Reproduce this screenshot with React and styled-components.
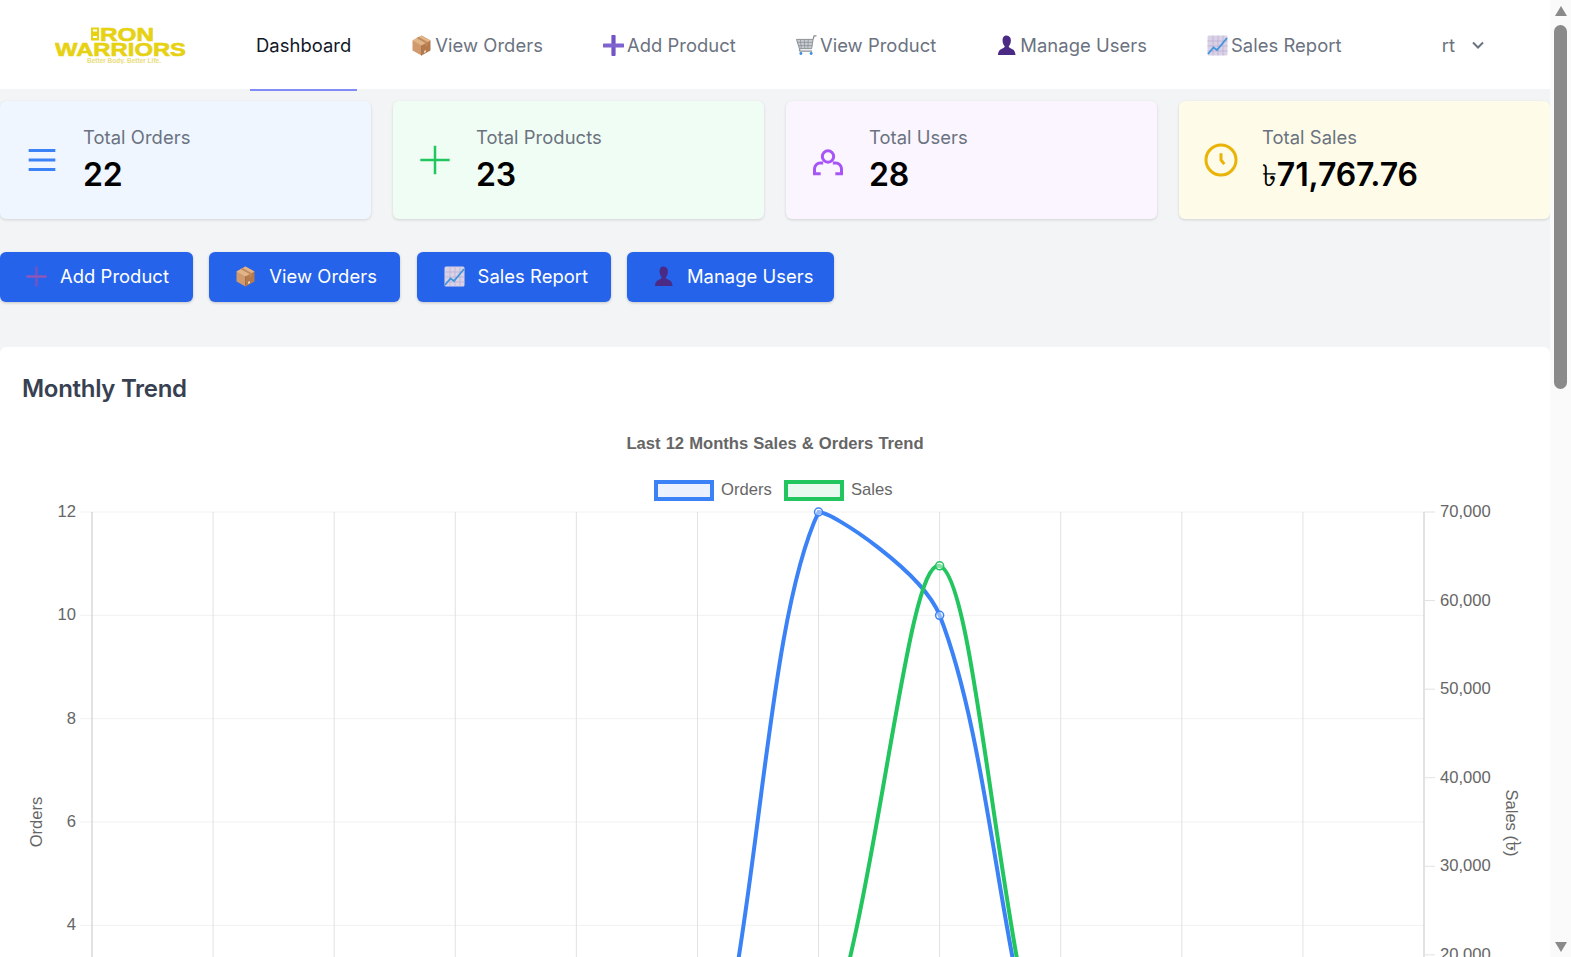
import React from "react";
import styled, { createGlobalStyle } from "styled-components";

const GlobalStyle = createGlobalStyle`
  body {
    margin: 0;
    background: #f3f4f6;
    font-family: Inter, "Noto Sans", sans-serif;
  }
`;

const Page = styled.div`
  min-height: 2354px;
  box-sizing: border-box;
  padding-right: 21px;
`;

// the window scrollbar of the screenshot, sits over the page edge
const ScrollBar = styled.div`
  position: fixed;
  top: 0;
  right: 0;
  bottom: 0;
  width: 21px;
  display: flex;
  flex-direction: column;
  align-items: center;
  background: #fafafa;
`;

const ScrollArrow = styled.div`
  width: 0;
  height: 0;
  border-left: 6.5px solid transparent;
  border-right: 6.5px solid transparent;
  border-${(p) => (p.$down ? "top" : "bottom")}: 10px solid #8a8a8a;
  margin-top: ${(p) => (p.$down ? "auto" : "6px")};
  margin-bottom: ${(p) => (p.$down ? "5px" : "0")};
`;

const ScrollThumb = styled.div`
  width: 13px;
  height: 364px;
  margin-top: 9px;
  border-radius: 7px;
  background: #8a8a8a;
`;

const Nav = styled.nav`
  height: 89px;
  background: #fff;
  display: flex;
  align-items: stretch;
  padding-right: 65px;
`;

const LogoBox = styled.div`
  width: 250px;
  flex: none;
  display: flex;
  align-items: center;
  padding-left: 55px;
  box-sizing: border-box;
`;

const NavLinks = styled.div`
  display: flex;
  gap: 48px;
`;

const NavLink = styled.a`
  display: flex;
  align-items: center;
  gap: 3px;
  height: 91px;
  box-sizing: border-box;
  padding: 1px 6px 0;
  font-size: 18.4px;
  letter-spacing: 0.05px;
  color: ${(p) => (p.$active ? "#111827" : "#6b7280")};
  border-bottom: 2px solid ${(p) => (p.$active ? "#818cf8" : "transparent")};
  white-space: nowrap;
`;

const UserMenu = styled.div`
  margin-left: auto;
  display: flex;
  align-items: center;
  gap: 16px;
  font-size: 18.4px;
  color: #6b7280;
`;

const Main = styled.main`
  margin-top: 12px;
`;

const Stats = styled.section`
  display: grid;
  grid-template-columns: repeat(4, 1fr);
  gap: 22px;
`;

const StatCard = styled.div`
  height: 118px;
  display: flex;
  align-items: center;
  gap: 21px;
  padding: 0 22px;
  box-sizing: border-box;
  border-radius: 6px;
  background: ${(p) => p.$bg};
  box-shadow: 0 1px 3px rgba(0, 0, 0, 0.14);
`;

const StatIcon = styled.svg`
  width: 40px;
  height: 40px;
  flex: none;
  color: ${(p) => p.$color};
`;

const StatLabel = styled.div`
  font-size: 18.4px;
  line-height: 29px;
  letter-spacing: 0.05px;
  color: #6b7280;
`;

const StatValue = styled.div`
  height: 45px;
  font-size: 32px;
  line-height: 45px;
  font-weight: 600;
  letter-spacing: -0.15px;
  color: #000;
`;

const Taka = styled.span`
  font-family: "DejaVu Serif", "Liberation Serif", serif;
  font-size: 30px;
  line-height: 0;
  font-weight: 400;
`;

const Actions = styled.div`
  display: flex;
  gap: 16.3px;
  margin-top: 33px;
`;

const ActionButton = styled.button`
  height: 50px;
  width: ${(p) => p.$width}px;
  display: flex;
  align-items: center;
  gap: 13px;
  padding: 0 0 2px ${(p) => p.$pad}px;
  border: 0;
  border-radius: 6px;
  background: #2563eb;
  color: #fff;
  font-family: inherit;
  font-size: 18.4px;
  letter-spacing: 0.05px;
  box-shadow: 0 1px 3px rgba(0, 0, 0, 0.2);
  white-space: nowrap;
`;

const Panel = styled.section`
  margin-top: 45px;
  background: #fff;
  border-radius: 6px;
  padding: 22px;
  box-shadow: 0 1px 2px rgba(0, 0, 0, 0.05);
`;

const PanelTitle = styled.h2`
  margin: 0;
  font-size: 24px;
  line-height: 40px;
  font-weight: 600;
  letter-spacing: -0.3px;
  color: #374151;
`;

const ChartSvg = styled.svg`
  display: block;
  width: 1506px;
  height: 773px;
  margin-top: 8px;
  font-family: "Liberation Sans", Arial, sans-serif;
  font-size: 16.6px;
  fill: #666;
`;

const Emoji = styled.svg`
  width: ${(p) => p.$size || 21}px;
  height: ${(p) => p.$size || 21}px;
  flex: none;
`;

const BoxEmoji = ({ size }) => (
  <Emoji $size={size} viewBox="2.5 1.5 19 21">
    <path d="M12 2 21 7v10l-9 5z" fill="#b57a4c" />
    <path d="M12 2 3 7v10l9 5z" fill="#d09a6c" />
    <path d="M3 7l9 5 9-5-9-5z" fill="#e2b48a" />
    <path d="M12 12v10" stroke="#a06a40" strokeWidth="0.8" />
    <path d="M7 4.5l9 5v3.6l2-1.1V8.4l-9-5z" fill="#c08a5c" />
    <path d="M14.5 17.5l2-1.1v2l-2 1.1z" fill="#e9d3bf" />
  </Emoji>
);

const PlusEmoji = ({ size, thin }) => (
  <Emoji $size={size} viewBox="1 1 22 22">
    <path d="M12 2.5v19" stroke="#7354c4" strokeWidth={thin ? 2.6 : 4.4} strokeLinecap="round" />
    <path d="M2.5 12h19" stroke={thin ? "#8f57b8" : "#7f63cf"} strokeWidth={thin ? 2.6 : 4.4} strokeLinecap="round" />
  </Emoji>
);

const CartEmoji = ({ size }) => (
  <Emoji $size={size} viewBox="1.5 1.5 21.5 21.5">
    <path d="M2 6h17l-1.5 9.5H5z" fill="#c9ccd1" stroke="#8b9097" strokeWidth="1" />
    <path d="M6 6l1 9.5M10 6l.5 9.5M14 6l-.3 9.5M2.8 9h15.6M3.6 12.4h14.3" stroke="#8b9097" strokeWidth="0.8" fill="none" />
    <path d="M19 6l1-3.5h2.5M5 15.5 5.5 18H18" stroke="#8b9097" strokeWidth="1.3" fill="none" />
    <circle cx="6.5" cy="20.5" r="1.5" fill="#3f8fe0" />
    <circle cx="17" cy="20.5" r="1.5" fill="#3f8fe0" />
  </Emoji>
);

const PersonEmoji = ({ size }) => (
  <Emoji $size={size} viewBox="2.5 1 19 22">
    <path
      d="M12 1.5c3 0 4.6 2.3 4.6 5.2 0 2.6-1 4.8-2.3 6 .2 1.3 1.3 1.9 3 2.6 2.3 1 3.7 2.3 4.2 6.7H3c.5-4.4 1.9-5.700 4.2-6.700 1.7-.7 2.8-1.3 3-2.6-1.3-1.2-2.3-3.4-2.3-6 0-2.900 1.100-5.200 4.100-5.200z"
      fill="#4b2a85"
    />
  </Emoji>
);

const ChartEmoji = ({ size }) => (
  <Emoji $size={size} viewBox="1.5 1.5 21 21">
    <rect x="2" y="2" width="20" height="20" rx="1.5" fill="#d9d2e6" />
    <path d="M2 7.5h20M2 12.5h20M2 17.5h20M7.5 2v20M12.5 2v20M17.5 2v20" stroke="#b9aed0" strokeWidth="0.7" />
    <path d="M2.5 20.5 8 14l3.5 2.5L21.5 4.500" stroke="#3f95dc" strokeWidth="1.8" fill="none" />
  </Emoji>
);

const Logo = () => (
  <svg width="132" height="38" viewBox="0 0 132 38" fontFamily="'Liberation Sans', Arial, sans-serif" fontWeight="700" fill="#e6d213">
    <rect x="36" y="1.5" width="8" height="13" />
    <rect x="38" y="3.5" width="4" height="2" fill="#fff" />
    <rect x="38" y="10" width="4" height="2" fill="#fff" />
    <text x="45" y="14.5" fontSize="18" textLength="54" lengthAdjust="spacingAndGlyphs" stroke="#e6d213" strokeWidth="0.6">RON</text>
    <text x="0" y="30" fontSize="19" textLength="131" lengthAdjust="spacingAndGlyphs" stroke="#e6d213" strokeWidth="0.6">WARRIORS</text>
    <text x="32" y="36.5" fontSize="6.5" textLength="74" lengthAdjust="spacingAndGlyphs" fill="#e9dc7a">Better Body. Better Life.</text>
  </svg>
);

const MenuIcon = () => (
  <StatIcon $color="#3b82f6" viewBox="0 0 24 24" fill="none" stroke="currentColor" strokeWidth="1.8">
    <path d="M4 6.3h16M4 12h16M4 17.7h16" />
  </StatIcon>
);

const AddIcon = () => (
  <StatIcon $color="#22c55e" viewBox="0 0 24 24" fill="none" stroke="currentColor" strokeWidth="1.5">
    <path d="M12 3.5v17M3.200 12h17.600" />
  </StatIcon>
);

const UserIcon = () => (
  <StatIcon $color="#a855f7" viewBox="0 0 24 24" fill="none" stroke="currentColor" strokeWidth="1.8">
    <circle cx="12" cy="9.900" r="3.400" />
    <path d="M9.100 13.800H7.400a3.500 3.500 0 0 0-3.500 3.500v3h3.700M14.900 13.800h1.700a3.500 3.500 0 0 1 3.500 3.500v3h-3.700" />
  </StatIcon>
);

const ClockIcon = () => (
  <StatIcon $color="#eab308" viewBox="0 0 24 24" fill="none" stroke="currentColor" strokeWidth="1.8">
    <circle cx="12" cy="12" r="9" />
    <path d="M12 8v4l2 2.500" />
  </StatIcon>
);

const navItems = [
  { label: "View Orders", Icon: BoxEmoji },
  { label: "Add Product", Icon: PlusEmoji },
  { label: "View Product", Icon: CartEmoji },
  { label: "Manage Users", Icon: PersonEmoji },
  { label: "Sales Report", Icon: ChartEmoji },
];

const stats = [
  { label: "Total Orders", value: "22", bg: "#eff6ff", Icon: MenuIcon },
  { label: "Total Products", value: "23", bg: "#f0fdf4", Icon: AddIcon },
  { label: "Total Users", value: "28", bg: "#faf5ff", Icon: UserIcon },
  { label: "Total Sales", value: "71,767.76", currency: "৳", bg: "#fefce8", Icon: ClockIcon },
];

const actions = [
  { label: "Add Product", Icon: PlusEmoji, width: 193, pad: 26, thin: true },
  { label: "View Orders", Icon: BoxEmoji, width: 191, pad: 26 },
  { label: "Sales Report", Icon: ChartEmoji, width: 194, pad: 27 },
  { label: "Manage Users", Icon: PersonEmoji, width: 207, pad: 26 },
];

// page coordinates of the plot, the chart svg viewBox starts at the panel padding
const plot = { left: 92, right: 1424, top: 512, bottom: 1132 };
const stepX = (plot.right - plot.left) / 11;
const xAt = (i) => plot.left + stepX * i;
const ordersY = (v) => plot.bottom - (v / 12) * (plot.bottom - plot.top);
const salesY = (v) => plot.bottom - (v / 70000) * (plot.bottom - plot.top);

const orders = [0, 0, 0, 0, 0, 0, 12, 10, 0, 0, 0, 0];
const sales = [0, 0, 0, 0, 0, 0, 7847.76, 63920, 0, 0, 0, 0];

const capY = (y) => Math.min(plot.bottom, Math.max(plot.top, y));

// same spline the chart lib uses, control points capped to the plot
const splinePath = (pts, t = 0.3) => {
  const ctrl = pts.map((p, i) => {
    const a = pts[i - 1] || p;
    const b = pts[i + 1] || p;
    const d1 = Math.hypot(p.x - a.x, p.y - a.y);
    const d2 = Math.hypot(b.x - p.x, b.y - p.y);
    const sum = d1 + d2 || 1;
    return {
      inX: p.x - (t * d1 * (b.x - a.x)) / sum,
      inY: capY(p.y - (t * d1 * (b.y - a.y)) / sum),
      outX: p.x + (t * d2 * (b.x - a.x)) / sum,
      outY: capY(p.y + (t * d2 * (b.y - a.y)) / sum),
    };
  });
  return pts.reduce((d, p, i) => {
    if (i === 0) return `M${p.x} ${p.y}`;
    const c0 = ctrl[i - 1];
    const c1 = ctrl[i];
    return `${d} C${c0.outX} ${c0.outY} ${c1.inX} ${c1.inY} ${p.x} ${p.y}`;
  }, "");
};

const Series = ({ values, toY, color }) => {
  const pts = values.map((v, i) => ({ x: xAt(i), y: toY(v) }));
  return (
    <g>
      <path d={splinePath(pts)} fill="none" stroke={color} strokeWidth="4" />
      {pts.map((p, i) => (
        <circle key={i} cx={p.x} cy={p.y} r="4" fill="#fff" fillOpacity="0.45" stroke={color} strokeWidth="1.5" />
      ))}
    </g>
  );
};

const TrendChart = () => {
  const xs = Array.from({ length: 12 }, (_, i) => xAt(i));
  const leftTicks = [12, 10, 8, 6, 4, 2, 0];
  const rightTicks = [70000, 60000, 50000, 40000, 30000, 20000, 10000, 0];
  return (
    <ChartSvg viewBox="22 417 1506 773">
      <text x="775" y="449" textAnchor="middle" fontWeight="700" wordSpacing="0.5">
        Last 12 Months Sales &amp; Orders Trend
      </text>

      <rect x="656" y="482" width="56" height="17" fill="#ebf2fe" stroke="#3b82f6" strokeWidth="4" />
      <text x="721" y="495">Orders</text>
      <rect x="786" y="482" width="56" height="17" fill="#e9f9ef" stroke="#22c55e" strokeWidth="4" />
      <text x="851" y="495">Sales</text>

      {leftTicks.map((v) => (
        <g key={v}>
          <line x1="80" x2={plot.right} y1={ordersY(v)} y2={ordersY(v)} stroke="#f1f1f1" strokeWidth="1" />
          <text x="76" y={ordersY(v) + 5} textAnchor="end">{v}</text>
        </g>
      ))}
      {xs.slice(1, 11).map((x) => (
        <line key={x} x1={x} x2={x} y1={plot.top} y2={plot.bottom} stroke="#e2e2e2" strokeWidth="1" />
      ))}
      <line x1={plot.left} x2={plot.left} y1={plot.top} y2={plot.bottom} stroke="#cfcfcf" strokeWidth="1.2" />
      <line x1={plot.right} x2={plot.right} y1={plot.top} y2={plot.bottom} stroke="#cfcfcf" strokeWidth="1.2" />
      {rightTicks.map((v) => (
        <g key={v}>
          <line x1={plot.right} x2={plot.right + 11} y1={salesY(v)} y2={salesY(v)} stroke="#e2e2e2" strokeWidth="1" />
          <text x="1440" y={salesY(v) + 5}>{v.toLocaleString("en-US")}</text>
        </g>
      ))}

      <text transform="translate(42 822) rotate(-90)" textAnchor="middle">Orders</text>
      <text transform="translate(1506 823) rotate(90)" textAnchor="middle">
        Sales (<tspan fontSize="21">৳</tspan>)
      </text>

      <Series values={orders} toY={ordersY} color="#3b82f6" />
      <Series values={sales} toY={salesY} color="#22c55e" />
    </ChartSvg>
  );
};

const App = () => (
  <Page>
    <GlobalStyle />
    <Nav>
      <LogoBox>
        <Logo />
      </LogoBox>
      <NavLinks>
        <NavLink $active>Dashboard</NavLink>
        {navItems.map(({ label, Icon }) => (
          <NavLink key={label}>
            <Icon />
            {label}
          </NavLink>
        ))}
      </NavLinks>
      <UserMenu>
        rt
        <svg width="14" height="14" viewBox="0 0 14 14" fill="none" stroke="#6b7280" strokeWidth="2">
          <path d="M2 4.5l5 5 5-5" />
        </svg>
      </UserMenu>
    </Nav>
    <Main>
      <Stats>
        {stats.map(({ label, value, currency, bg, Icon }) => (
          <StatCard key={label} $bg={bg}>
            <Icon />
            <div>
              <StatLabel>{label}</StatLabel>
              <StatValue>
                {currency && <Taka>{currency}</Taka>}
                {value}
              </StatValue>
            </div>
          </StatCard>
        ))}
      </Stats>
      <Actions>
        {actions.map(({ label, Icon, width, pad, thin }) => (
          <ActionButton key={label} $width={width} $pad={pad}>
            <Icon size={21} thin={thin} />
            {label}
          </ActionButton>
        ))}
      </Actions>
      <Panel>
        <PanelTitle>Monthly Trend</PanelTitle>
        <TrendChart />
      </Panel>
    </Main>
    <ScrollBar>
      <ScrollArrow />
      <ScrollThumb />
      <ScrollArrow $down />
    </ScrollBar>
  </Page>
);

export default App;
